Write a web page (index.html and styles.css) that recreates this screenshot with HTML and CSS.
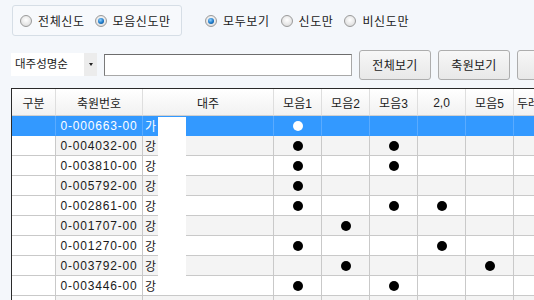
FILE: index.html
```html
<!DOCTYPE html>
<html lang="ko">
<head>
<meta charset="utf-8">
<link rel="stylesheet" href="styles.css">
</head>
<body>
<div class="app">
  <div class="row1">
    <div class="group">
      <label class="radio"><span class="dot"></span><span>전체신도</span></label>
      <label class="radio"><span class="dot on"></span><span>모음신도만</span></label>
    </div>
    <div class="radios">
      <label class="radio"><span class="dot on"></span><span>모두보기</span></label>
      <label class="radio"><span class="dot"></span><span>신도만</span></label>
      <label class="radio"><span class="dot"></span><span>비신도만</span></label>
    </div>
  </div>
  <div class="row2">
    <div class="combo"><span class="combo-text">대주성명순</span><span class="combo-btn"><span class="tri"></span></span></div>
    <div class="input"></div>
    <div class="btn">전체보기</div>
    <div class="btn">축원보기</div>
    <div class="btn"></div>
  </div>
  <div class="grid">
    <div class="tr head">
      <div class="c">구분</div><div class="c">축원번호</div><div class="c">대주</div>
      <div class="c">모음1</div><div class="c">모음2</div><div class="c">모음3</div><div class="c">2,0</div><div class="c">모음5</div><div class="c left">두레</div>
    </div>
    <div class="tr sel">
      <div class="c"></div><div class="c num">0-000663-00</div><div class="c name">가</div>
      <div class="c"><i class="b"></i></div><div class="c"></div><div class="c"></div><div class="c"></div><div class="c"></div><div class="c"></div>
    </div>
    <div class="tr alt">
      <div class="c"></div><div class="c num">0-004032-00</div><div class="c name">강</div>
      <div class="c"><i class="b"></i></div><div class="c"></div><div class="c"><i class="b"></i></div><div class="c"></div><div class="c"></div><div class="c"></div>
    </div>
    <div class="tr">
      <div class="c"></div><div class="c num">0-003810-00</div><div class="c name">강</div>
      <div class="c"><i class="b"></i></div><div class="c"></div><div class="c"><i class="b"></i></div><div class="c"></div><div class="c"></div><div class="c"></div>
    </div>
    <div class="tr alt">
      <div class="c"></div><div class="c num">0-005792-00</div><div class="c name">강</div>
      <div class="c"><i class="b"></i></div><div class="c"></div><div class="c"></div><div class="c"></div><div class="c"></div><div class="c"></div>
    </div>
    <div class="tr">
      <div class="c"></div><div class="c num">0-002861-00</div><div class="c name">강</div>
      <div class="c"><i class="b"></i></div><div class="c"></div><div class="c"><i class="b"></i></div><div class="c"><i class="b"></i></div><div class="c"></div><div class="c"></div>
    </div>
    <div class="tr alt">
      <div class="c"></div><div class="c num">0-001707-00</div><div class="c name">강</div>
      <div class="c"></div><div class="c"><i class="b"></i></div><div class="c"></div><div class="c"></div><div class="c"></div><div class="c"></div>
    </div>
    <div class="tr">
      <div class="c"></div><div class="c num">0-001270-00</div><div class="c name">강</div>
      <div class="c"><i class="b"></i></div><div class="c"></div><div class="c"></div><div class="c"><i class="b"></i></div><div class="c"></div><div class="c"></div>
    </div>
    <div class="tr alt">
      <div class="c"></div><div class="c num">0-003792-00</div><div class="c name">강</div>
      <div class="c"></div><div class="c"><i class="b"></i></div><div class="c"></div><div class="c"></div><div class="c"><i class="b"></i></div><div class="c"></div>
    </div>
    <div class="tr">
      <div class="c"></div><div class="c num">0-003446-00</div><div class="c name">강</div>
      <div class="c"><i class="b"></i></div><div class="c"></div><div class="c"><i class="b"></i></div><div class="c"></div><div class="c"></div><div class="c"></div>
    </div>
    <div class="tr alt">
      <div class="c"></div><div class="c num"></div><div class="c name"></div>
      <div class="c"></div><div class="c"></div><div class="c"></div><div class="c"></div><div class="c"></div><div class="c"></div>
    </div>
    <div class="mask"></div>
  </div>
</div>
</body>
</html>
```
FILE: styles.css
```css
* { box-sizing: border-box; }
html, body { margin: 0; padding: 0; }
body {
  width: 534px;
  height: 300px;
  overflow: hidden;
  background: #f4f7fb;
  font-family: "Liberation Sans", "Noto Sans CJK KR", sans-serif;
  font-size: 12px;
  color: #1a1a1a;
}
.app { width: 534px; }

.row1 {
  display: flex;
  align-items: center;
  padding: 5px 0 0 12px;
  height: 36px;
}
.group {
  display: flex;
  align-items: center;
  gap: 10px;
  width: 170px;
  height: 31px;
  padding-left: 7px;
  border: 1px solid #d6dee6;
  border-radius: 3px;
  background: #f7f9fc;
  flex: none;
}
.radios {
  display: flex;
  align-items: center;
  gap: 11px;
  margin-left: 23px;
}
.radio {
  display: flex;
  align-items: center;
  gap: 6px;
  font-size: 12px;
  letter-spacing: 0.6px;
  color: #1a1a1a;
}
.dot {
  width: 12px;
  height: 12px;
  flex: none;
  border-radius: 50%;
  border: 1px solid #9a9a9a;
  background: radial-gradient(circle at 50% 40%, #ffffff 0%, #e6e6e6 60%, #cfcfcf 100%);
  display: flex;
  align-items: center;
  justify-content: center;
}
.dot.on::after {
  content: "";
  width: 6px;
  height: 6px;
  border-radius: 50%;
  background: radial-gradient(circle at 40% 35%, #8fd0ff 0%, #1a78c8 55%, #0b3f73 100%);
}

.row2 {
  display: flex;
  align-items: center;
  gap: 7px;
  padding-left: 11px;
  margin-top: 13px;
  height: 31px;
}
.row2 > * { flex: none; }
.combo {
  display: flex;
  width: 86px;
  height: 23px;
  background: #fff;
}
.combo-text {
  flex: 1;
  padding-left: 4px;
  line-height: 23px;
  font-size: 11.5px;
}
.combo-btn {
  width: 13px;
  background: #ececec;
  display: flex;
  align-items: center;
  justify-content: center;
}
.tri {
  width: 0;
  height: 0;
  border-left: 2.5px solid transparent;
  border-right: 2.5px solid transparent;
  border-top: 3px solid #222;
}
.input {
  width: 248px;
  height: 22px;
  background: #fff;
  border: 1px solid #a8a8a8;
  border-top-color: #6d6d6d;
  border-left-color: #7a7a7a;
}
.btn {
  width: 72px;
  height: 30px;
  border: 1px solid #adadad;
  border-radius: 3px;
  background: linear-gradient(#f7f7f7, #e8e8e8);
  display: flex;
  align-items: center;
  justify-content: center;
  font-size: 12px;
  letter-spacing: 0.3px;
}

.grid {
  position: relative;
  margin: 8px 0 0 11px;
  border-top: 1px solid #2a2a2a;
  border-left: 1px solid #2a2a2a;
  width: 600px;
}
.tr {
  display: grid;
  grid-template-columns: 44px 87px 131px 48px 48px 48px 48px 48px 60px;
  height: 20px;
  background: #fff;
}
.tr.alt { background: #f4f4f4; }
.tr.alt .c:first-child { background: #fff; }
.tr.head {
  height: 27px;
  background: linear-gradient(#ffffff, #f1f1f1);
}
.c {
  border-right: 1px solid #c9c9c9;
  border-bottom: 1px solid #c9c9c9;
  display: flex;
  align-items: center;
  justify-content: center;
  white-space: nowrap;
  overflow: hidden;
}
.head .c {
  border-right-color: #dedede;
  border-bottom-color: #d0d0d0;
  font-size: 12px;
  color: #222;
  padding-top: 1px;
}
.head .c.left { justify-content: flex-start; padding-left: 3px; }
.num { letter-spacing: 0.8px; font-size: 12px; }
.name { justify-content: flex-start; padding-left: 2px; }
.tr.sel { background: #3399ff; color: #fff; }
.tr.sel .c { border-right-color: #5aabff; border-bottom-color: #3399ff; }
.b {
  display: block;
  width: 10px;
  height: 10px;
  border-radius: 50%;
  background: #000;
}
.sel .b { background: #fff; }
.mask {
  position: absolute;
  left: 146px;
  top: 28px;
  width: 28px;
  height: 176px;
  background: #fff;
}
```
